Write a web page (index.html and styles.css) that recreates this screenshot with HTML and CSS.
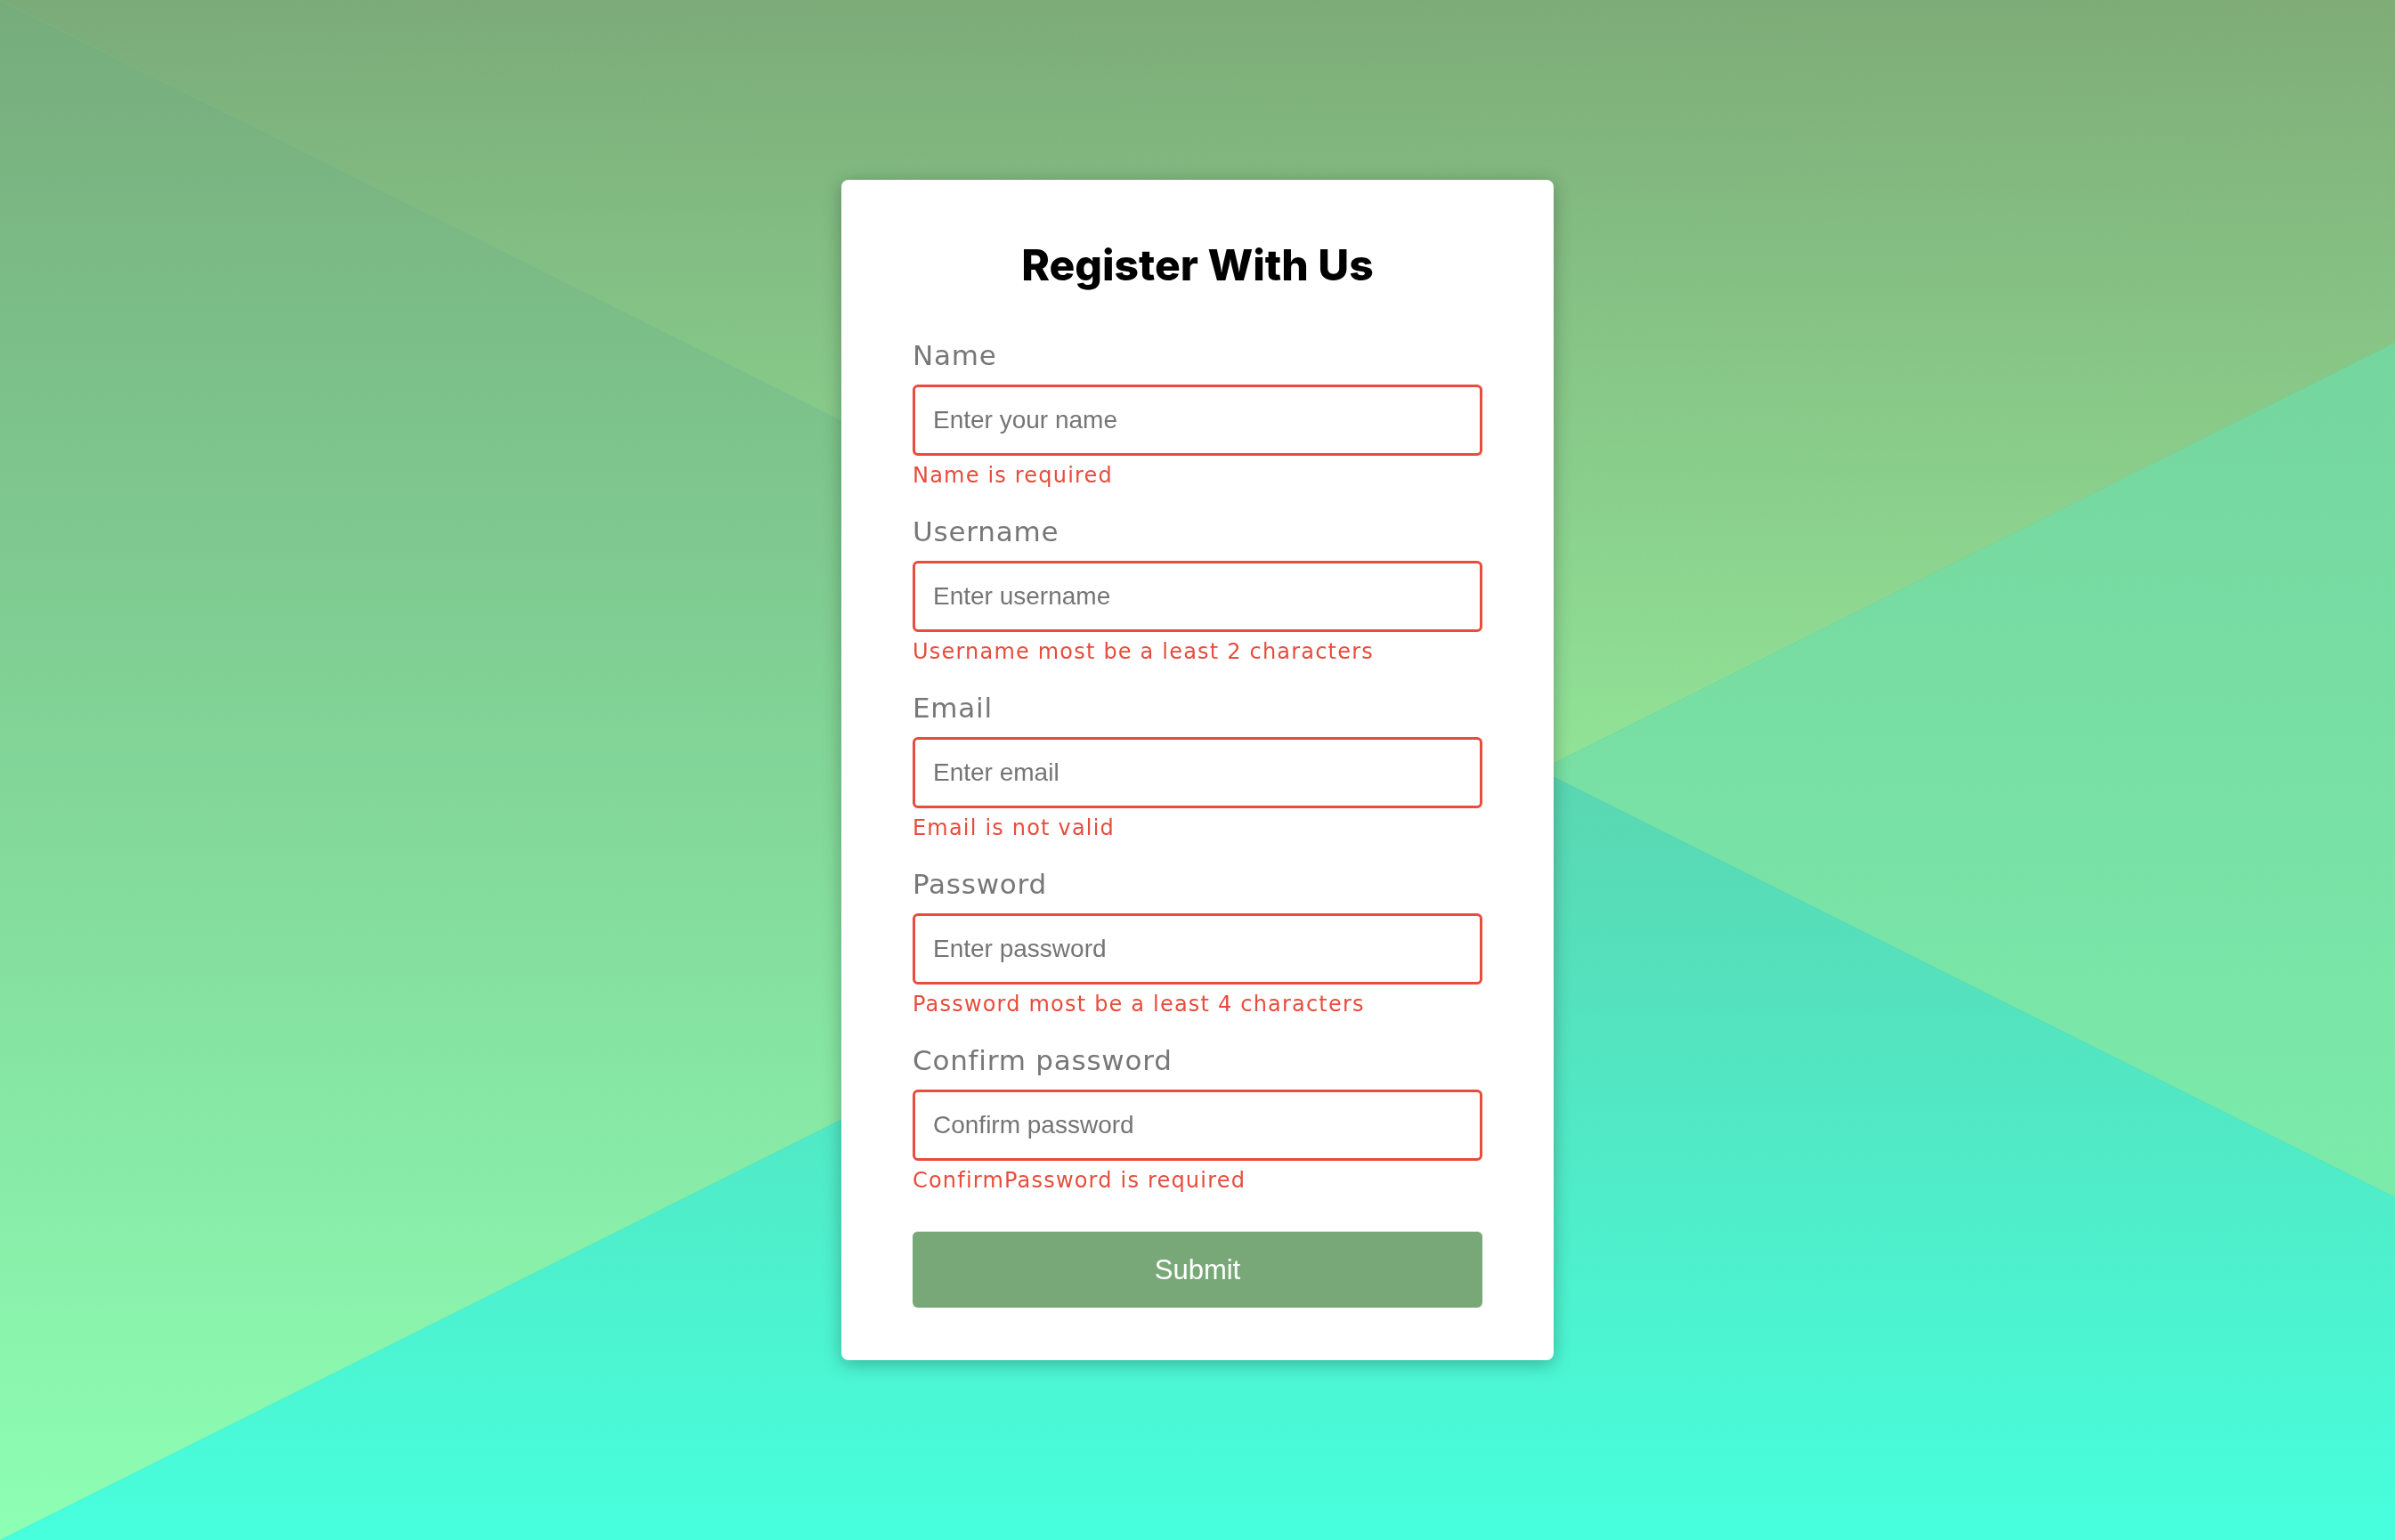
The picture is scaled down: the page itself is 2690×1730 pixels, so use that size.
FILE: index.html
```html
<!DOCTYPE html>
<html lang="en">
<head>
<meta charset="UTF-8">
<title>Register With Us</title>
<link rel="stylesheet" href="styles.css">
</head>
<body>
<svg class="bg" viewBox="0 0 2690 1730" preserveAspectRatio="none" aria-hidden="true">
  <defs>
    <linearGradient id="gTop" gradientUnits="userSpaceOnUse" x1="0" y1="0" x2="0" y2="865">
      <stop offset="0" stop-color="#7bab79"/>
      <stop offset="1" stop-color="#8fe59a"/>
    </linearGradient>
    <linearGradient id="gTopR" gradientUnits="userSpaceOnUse" x1="0" y1="0" x2="2690" y2="300">
      <stop offset="0" stop-color="#c0c060" stop-opacity="0"/>
      <stop offset="1" stop-color="#c0c060" stop-opacity="0.06"/>
    </linearGradient>
    <linearGradient id="gLeft" gradientUnits="userSpaceOnUse" x1="0" y1="0" x2="0" y2="1730">
      <stop offset="0" stop-color="#77ac7c"/>
      <stop offset="1" stop-color="#8dffb4"/>
    </linearGradient>
    <linearGradient id="gRight" gradientUnits="userSpaceOnUse" x1="0" y1="385" x2="0" y2="1345">
      <stop offset="0" stop-color="#75d59f"/>
      <stop offset="1" stop-color="#7bebaa"/>
    </linearGradient>
    <linearGradient id="gBottom" gradientUnits="userSpaceOnUse" x1="0" y1="865" x2="0" y2="1730">
      <stop offset="0" stop-color="#5ad6b1"/>
      <stop offset="1" stop-color="#47ffdd"/>
    </linearGradient>
  </defs>
  <polygon points="0,0 2690,0 2690,385 1730,865" fill="url(#gTop)"/>
  <polygon points="0,0 2690,0 2690,385 1730,865" fill="url(#gTopR)"/>
  <polygon points="0,0 1730,865 0,1730" fill="url(#gLeft)"/>
  <polygon points="2690,385 2690,1345 1730,865" fill="url(#gRight)"/>
  <polygon points="0,1730 1730,865 2690,1345 2690,1730" fill="url(#gBottom)"/>
</svg>

<main class="page">
  <form class="card" novalidate>
    <h2 class="title">Register With Us</h2>

    <div class="field">
      <label class="label" for="name">Name</label>
      <input class="input" type="text" id="name" placeholder="Enter your name">
      <small class="error">Name is required</small>
    </div>

    <div class="field">
      <label class="label" for="username">Username</label>
      <input class="input" type="text" id="username" placeholder="Enter username">
      <small class="error">Username most be a least 2 characters</small>
    </div>

    <div class="field">
      <label class="label" for="email">Email</label>
      <input class="input" type="text" id="email" placeholder="Enter email">
      <small class="error">Email is not valid</small>
    </div>

    <div class="field">
      <label class="label" for="password">Password</label>
      <input class="input" type="password" id="password" placeholder="Enter password">
      <small class="error">Password most be a least 4 characters</small>
    </div>

    <div class="field">
      <label class="label" for="password2">Confirm password</label>
      <input class="input" type="password" id="password2" placeholder="Confirm password">
      <small class="error">ConfirmPassword is required</small>
    </div>

    <button class="submit" type="submit">Submit</button>
  </form>
</main>
</body>
</html>
```

FILE: styles.css
```css
html, body {
  margin: 0;
  padding: 0;
  height: 100%;
}

body {
  font-family: "DejaVu Sans", "Liberation Sans", sans-serif;
  background: #6fc98f;
  overflow: hidden;
}

.bg {
  position: fixed;
  top: 0;
  left: 0;
  width: 100%;
  height: 100%;
  z-index: 0;
  display: block;
}

.page {
  position: relative;
  z-index: 1;
  height: 100%;
  display: flex;
  align-items: center;
  justify-content: center;
}

.card {
  width: 800px;
  box-sizing: border-box;
  background: #fff;
  border-radius: 8px;
  padding: 68px 80px 59px;
  box-shadow: 0 4px 20px rgba(0, 0, 0, 0.28);
  display: flex;
  flex-direction: column;
}

.title {
  margin: 0 0 55px;
  text-align: center;
  font-family: "Inter", "Liberation Sans", sans-serif;
  font-weight: 800;
  font-size: 48px;
  line-height: 56px;
  color: #000;
  letter-spacing: 0;
}

.field {
  display: flex;
  flex-direction: column;
  margin-bottom: 30px;
}

.label {
  display: block;
  font-size: 31px;
  line-height: 36px;
  color: #777;
  margin-bottom: 15px;
  letter-spacing: 0.025em;
  font-weight: 400;
}

.input {
  display: block;
  width: 100%;
  height: 80px;
  box-sizing: border-box;
  border: 3px solid #e74c3c;
  border-radius: 6px;
  padding: 0 20px;
  font-family: "Liberation Sans", Arial, sans-serif;
  font-size: 28px;
  color: #333;
  background: #fff;
  outline: none;
  margin: 0;
}

.input::placeholder {
  color: #757575;
  opacity: 1;
}

.error {
  display: block;
  margin-top: 7px;
  font-size: 24px;
  line-height: 30px;
  color: #e74c3c;
  letter-spacing: 0.05em;
}

.submit {
  display: block;
  width: 100%;
  height: 86px;
  margin-top: 12px;
  border: none;
  border-top: 1px solid #d9d9d9;
  border-radius: 6px;
  background: #78a878;
  color: #fff;
  font-family: "Liberation Sans", Arial, sans-serif;
  font-size: 31px;
  cursor: pointer;
  padding: 0;
}
```
